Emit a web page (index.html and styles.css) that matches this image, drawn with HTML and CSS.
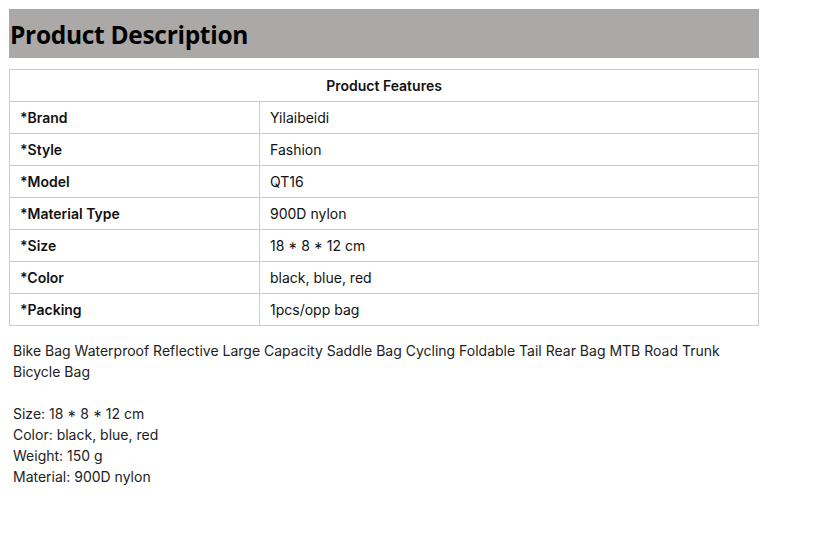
FILE: index.html
```html
<!DOCTYPE html>
<html>
<head>
<meta charset="utf-8">
<link rel="stylesheet" href="styles.css">
</head>
<body>
<div class="page">
  <h1 class="title">Product Description</h1>
  <table class="features">
    <tr><th colspan="2">Product Features</th></tr>
    <tr><td class="key">*Brand</td><td>Yilaibeidi</td></tr>
    <tr><td class="key">*Style</td><td>Fashion</td></tr>
    <tr><td class="key">*Model</td><td>QT16</td></tr>
    <tr><td class="key">*Material Type</td><td>900D nylon</td></tr>
    <tr><td class="key">*Size</td><td>18 * 8 * 12 cm</td></tr>
    <tr><td class="key">*Color</td><td>black, blue, red</td></tr>
    <tr><td class="key">*Packing</td><td>1pcs/opp bag</td></tr>
  </table>
  <div class="desc">
    <p>Bike Bag Waterproof Reflective Large Capacity Saddle Bag Cycling Foldable Tail Rear Bag MTB Road Trunk Bicycle Bag</p>
    <p>Size: 18 * 8 * 12 cm<br>Color: black, blue, red<br>Weight: 150 g<br>Material: 900D nylon</p>
  </div>
</div>
</body>
</html>
```
FILE: styles.css
```css
html, body { margin: 0; padding: 0; background: #fff; }
.page { padding: 9px; width: 750px; font-family: Inter, "Liberation Sans", sans-serif; color: #222; }
.title {
  margin: 0;
  height: 49px;
  background: #aaa9a7;
  border-bottom: 1px solid #a9aab0;
  box-sizing: border-box;
  font-family: "Open Sans", "Noto Sans", sans-serif;
  font-weight: 700;
  font-size: 24.5px;
  line-height: 51px;
  padding-left: 1px;
  color: #000;
  letter-spacing: -0.3px;
}
.features {
  margin-top: 11px;
  width: 750px;
  border-collapse: collapse;
  font-size: 14px;
  color: #111;
}
.features th, .features td {
  border: 1px solid #cccccc;
  height: 32px;
  box-sizing: border-box;
  padding: 0 10px;
  text-align: left;
  font-weight: 400;
}
.features th { text-align: center; font-weight: 600; }
.features td.key { width: 250px; font-weight: 600; }
.desc { padding: 0 4px; font-size: 14px; line-height: 21px; color: #222; }
.desc p { margin: 14px 0 21px; }
.desc p + p { margin-top: 0; }
```
